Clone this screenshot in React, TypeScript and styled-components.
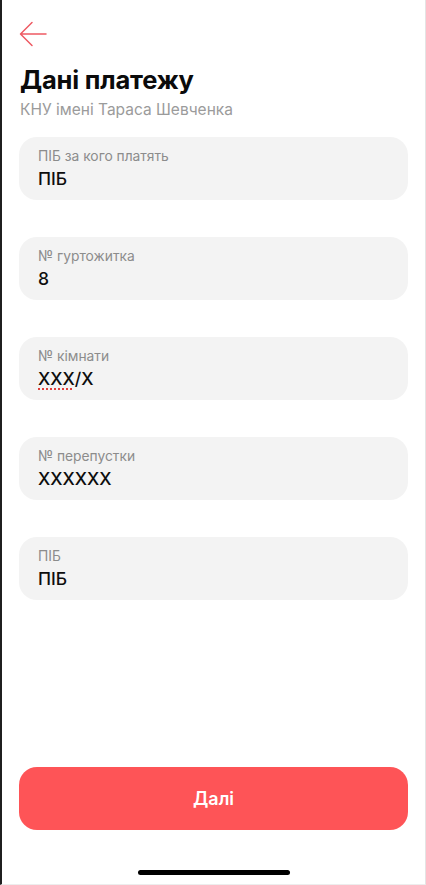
import React, { FunctionComponent } from "react";
import styled, { createGlobalStyle } from "styled-components";

const GlobalStyle = createGlobalStyle`
    html, body {
        margin: 0;
        padding: 0;
        background: #ffffff;
    }
    * {
        box-sizing: border-box;
    }
`
const Screen = styled.div`
    width: 426px;
    height: 885px;
    display: flex;
    flex-direction: column;
    padding: 22px 17px 9px 17px;
    border-left: 2px solid #1f1f1f;
    border-right: 1px solid #e4e4e4;
    border-bottom: 1px solid #ededed;
    background: #ffffff;
    font-family: Inter, "Noto Sans", sans-serif;
`
const BackButton = styled.button`
    width: 28px;
    height: 24px;
    padding: 0;
    border: none;
    background: none;
    display: flex;
    align-items: center;
`
const Title = styled.h1`
    margin: 17px 0 0 1px;
    font-size: 25.5px;
    line-height: 34px;
    font-weight: 700;
    color: #0b0b0b;
    letter-spacing: -0.2px;
`
const Subtitle = styled.p`
    margin: 3px 0 0 1px;
    font-size: 15.5px;
    line-height: 20px;
    color: #9b9b9b;
`
const Fields = styled.div`
    margin-top: 17px;
    display: flex;
    flex-direction: column;
    gap: 37px;
`
const Field = styled.div`
    height: 63px;
    border-radius: 18px;
    background: #f3f3f3;
    padding: 10px 19px 0 19px;
`
const Label = styled.div`
    font-size: 13.8px;
    line-height: 18px;
    color: #8c8c8c;
`
const Value = styled.div`
    margin-top: 2px;
    font-size: 17.5px;
    line-height: 24px;
    font-weight: 500;
    color: #0d0d0d;
`
const Misspelled = styled.span`
    text-decoration: underline dotted #e0403c;
    text-decoration-thickness: 2px;
    text-underline-offset: 3px;
`
const Spacer = styled.div`
    flex: 1;
`
const NextButton = styled.button`
    width: 100%;
    height: 63px;
    border: none;
    border-radius: 18px;
    background: #fe5457;
    color: #ffffff;
    font-family: Inter, "Noto Sans", sans-serif;
    font-size: 18px;
    font-weight: 600;
`
const HomeBar = styled.div`
    width: 152px;
    height: 5px;
    border-radius: 3px;
    background: #000000;
    margin: 40px auto 0 auto;
`

const fields = [
    { label: "ПІБ за кого платять", value: "ПІБ" },
    { label: "№ гуртожитка", value: "8" },
    { label: "№ кімнати", value: "room" },
    { label: "№ перепустки", value: "XXXXXX" },
    { label: "ПІБ", value: "ПІБ" },
]

const App: FunctionComponent = () => {
    return (
        <>
            <GlobalStyle />
            <Screen>
                <BackButton aria-label="Назад">
                    <svg width="28" height="26" viewBox="0 0 28 26" fill="none">
                        <path d="M27 13H2M13 1.5L1.5 13L13 24.5" stroke="#ee5a63" strokeWidth="1.5" strokeLinecap="round" strokeLinejoin="round" />
                    </svg>
                </BackButton>
                <Title>Дані платежу</Title>
                <Subtitle>КНУ імені Тараса Шевченка</Subtitle>
                <Fields>
                    {fields.map((f) => (
                        <Field key={f.label + f.value}>
                            <Label>{f.label}</Label>
                            <Value>
                                {f.value === "room" ? <><Misspelled>XXX</Misspelled>/X</> : f.value}
                            </Value>
                        </Field>
                    ))}
                </Fields>
                <Spacer />
                <NextButton>Далі</NextButton>
                <HomeBar />
            </Screen>
        </>
    )
};
export default App;
